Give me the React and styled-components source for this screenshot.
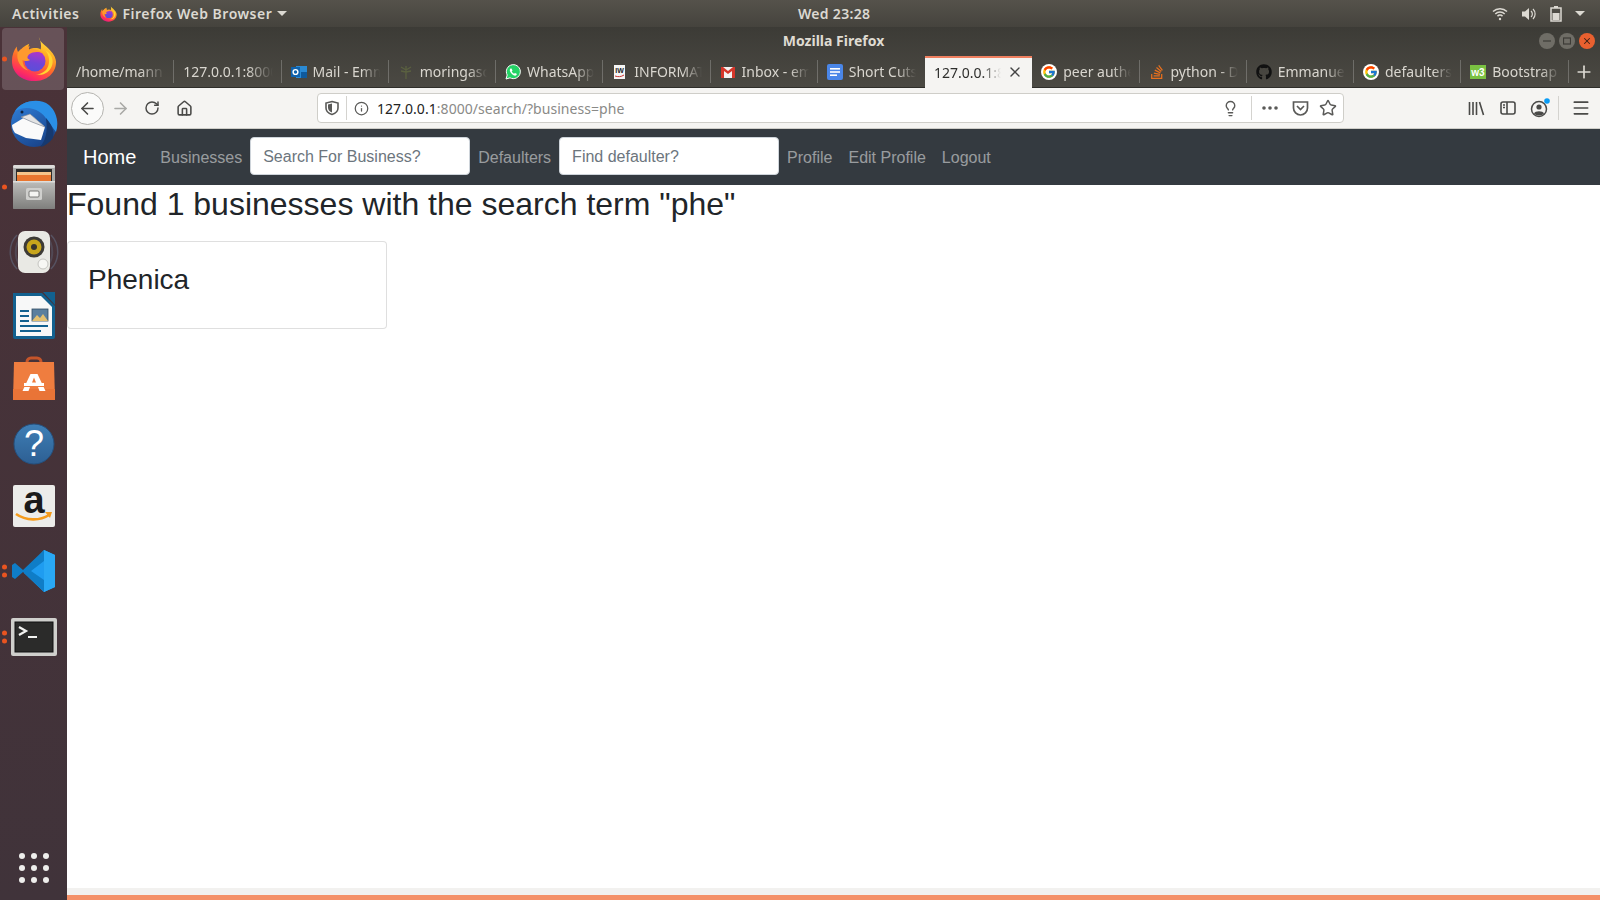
import React from 'react';
import styled, { createGlobalStyle } from 'styled-components';
import { ArrowLeft, ArrowRight, RotateCw, Home as HomeIcon, Info, Lightbulb, Star, X, Plus, Menu } from 'lucide-react';
import { FcGoogle } from 'react-icons/fc';
import { FaGithub, FaStackOverflow } from 'react-icons/fa';

const GlobalStyle = createGlobalStyle`
  html, body {
    margin: 0;
    padding: 0;
    height: 100%;
    overflow: hidden;
  }
  #root {
    height: 100%;
  }
  * {
    box-sizing: border-box;
  }
`;

const Screen = styled.div`
  width: 1600px;
  height: 900px;
  display: flex;
  flex-direction: column;
  font-family: 'Noto Sans', sans-serif;
  background: #fff;
`;

const TopPanel = styled.div`
  height: 27px;
  flex: none;
  display: grid;
  grid-template-columns: 798px 72px 1fr;
  align-items: center;
  background: linear-gradient(#55524b, #45433d);
  color: #dcd9d2;
  font-size: 14px;
  font-weight: 600;
  letter-spacing: 0.5px;
`;

const PanelLeft = styled.div`
  display: flex;
  align-items: center;
  padding-left: 12px;
`;

const AppMenu = styled.div`
  display: flex;
  align-items: center;
  gap: 5px;
  margin-left: 21px;
`;

const Caret = styled.span`
  width: 0;
  height: 0;
  border-left: 5px solid transparent;
  border-right: 5px solid transparent;
  border-top: 5px solid #dcd9d2;
`;

const Clock = styled.div`
  text-align: center;
  white-space: nowrap;
  letter-spacing: 0.3px;
`;

const PanelRight = styled.div`
  display: flex;
  align-items: center;
  justify-content: flex-end;
  gap: 13px;
  padding-right: 15px;
`;

const Desktop = styled.div`
  flex: 1;
  min-height: 0;
  display: flex;
`;

const Dock = styled.div`
  width: 67px;
  flex: none;
  display: flex;
  flex-direction: column;
  background: linear-gradient(#4a3238, #40333a);
`;

const DockItem = styled.div`
  position: relative;
  height: 64.2px;
  flex: none;
  display: flex;
  align-items: center;
  justify-content: center;
  padding-bottom: ${(p) => (p.$lift || 0) * 2}px;
`;

const DockActive = styled(DockItem)`
  &::before {
    content: '';
    position: absolute;
    left: 2px;
    right: 3px;
    top: 1px;
    bottom: 1px;
    border-radius: 4px;
    background: rgba(255, 255, 255, 0.16);
  }
  svg {
    position: relative;
  }
`;

const DockGrid = styled(DockItem)`
  margin-top: auto;
`;

const RunDots = styled.div`
  position: absolute;
  left: 2px;
  top: calc(50% - ${(p) => p.$lift || 0}px);
  transform: translateY(-50%);
  display: flex;
  flex-direction: column;
  gap: 3px;
`;

const RunDot = styled.span`
  width: 5px;
  height: 5px;
  border-radius: 50%;
  background: #e95420;
`;

const AppsGrid = styled.div`
  display: grid;
  grid-template-columns: repeat(3, 6px);
  gap: 6px;
`;

const AppsDot = styled.span`
  width: 6px;
  height: 6px;
  border-radius: 50%;
  background: #eeeeec;
`;

const Browser = styled.div`
  flex: 1;
  min-width: 0;
  display: flex;
  flex-direction: column;
`;

const Header = styled.div`
  height: 61px;
  flex: none;
  display: flex;
  flex-direction: column;
  background: linear-gradient(#3c3b36, #4b4943);
  border-bottom: 1px solid #2f2e2a;
`;

const TitleRow = styled.div`
  height: 27px;
  flex: none;
  display: grid;
  grid-template-columns: 1fr auto 1fr;
  align-items: center;
`;

const WindowTitle = styled.div`
  grid-column: 2;
  color: #dfdbd2;
  font-size: 14px;
  font-weight: 700;
`;

const WindowControls = styled.div`
  grid-column: 3;
  display: flex;
  justify-content: flex-end;
  gap: 4px;
  padding-right: 5px;
`;

const WindowButton = styled.div`
  width: 16px;
  height: 16px;
  border-radius: 50%;
  display: flex;
  align-items: center;
  justify-content: center;
  background: ${(p) => (p.$close ? '#e9602f' : '#6f6d66')};
`;

const TabStrip = styled.div`
  flex: 1;
  display: flex;
  align-items: stretch;
  padding-top: 2px;
`;

const Tab = styled.div`
  width: 107.25px;
  flex: none;
  display: flex;
  align-items: center;
  gap: 6px;
  padding: 0 9px;
  font-size: 14px;
  color: #d9d6cf;
  position: relative;
  &::after {
    content: '';
    position: absolute;
    right: 0;
    top: 4px;
    bottom: 4px;
    width: 1px;
    background: ${(p) => (p.$bare ? 'transparent' : 'rgba(255, 255, 255, 0.22)')};
  }
`;

const ActiveTab = styled(Tab)`
  background: #f5f4f2;
  color: #2e2e2c;
  border-top: 2px solid #f08060;
  margin-bottom: -1px;
  padding: 0 9px 2px;
  &::after {
    display: none;
  }
`;

const TabLabel = styled.span`
  flex: 1;
  min-width: 0;
  white-space: nowrap;
  overflow: hidden;
  -webkit-mask-image: linear-gradient(to right, #000 72%, transparent);
  mask-image: linear-gradient(to right, #000 72%, transparent);
`;

const GoogleBadge = styled.span`
  width: 16px;
  height: 16px;
  flex: none;
  border-radius: 50%;
  background: #fff;
  display: flex;
  align-items: center;
  justify-content: center;
`;

const NewTab = styled.div`
  flex: 1;
  display: flex;
  align-items: center;
  justify-content: center;
  color: #dcd9d2;
`;

const Toolbar = styled.div`
  height: 41px;
  flex: none;
  display: flex;
  align-items: center;
  background: #f5f4f2;
  border-bottom: 1px solid #cfcec9;
  color: #4a4a48;
  padding-left: 4px;
`;

const BackButton = styled.div`
  width: 33px;
  height: 33px;
  flex: none;
  border: 1px solid #b5b4b0;
  border-radius: 50%;
  background: #fbfbfa;
  display: flex;
  align-items: center;
  justify-content: center;
`;

const ToolSlot = styled.div`
  width: ${(p) => p.$w || 32}px;
  flex: none;
  display: flex;
  align-items: center;
  justify-content: center;
  color: ${(p) => p.$color || 'inherit'};
`;

const UrlBar = styled.div`
  width: 1027px;
  height: 30px;
  flex: none;
  margin-left: 117px;
  margin-right: 116px;
  display: flex;
  align-items: center;
  background: #fff;
  border: 1px solid #cfcec9;
  border-radius: 4px;
`;

const UrlDivider = styled.span`
  width: 1px;
  height: 24px;
  flex: none;
  background: #d4d3cf;
`;

const UrlText = styled.div`
  flex: 1;
  font-size: 14px;
  color: #8a8a87;
  padding-left: 2px;
  white-space: nowrap;
  letter-spacing: 0.05px;
`;

const UrlHost = styled.span`
  color: #222;
`;

const ToolDivider = styled.span`
  width: 1px;
  height: 24px;
  flex: none;
  background: #d4d3cf;
`;

const Page = styled.div`
  flex: 1;
  min-height: 0;
  background: #fff;
  font-family: 'Liberation Sans', Arial, sans-serif;
  color: #212529;
`;

const Navbar = styled.nav`
  height: 56px;
  display: flex;
  align-items: center;
  padding: 0 16px;
  background: #343a40;
`;

const Brand = styled.a`
  font-size: 20px;
  line-height: 30px;
  color: #fff;
  margin-right: 16px;
`;

const NavLink = styled.a`
  font-size: 16px;
  line-height: 24px;
  padding: 9px 8px 7px;
  color: rgba(255, 255, 255, 0.5);
`;

const NavSearch = styled.input`
  width: 220px;
  height: 38px;
  margin-top: -2px;
  padding: 7px 12px 5px;
  border: 1px solid #ced4da;
  border-radius: 4px;
  font-family: inherit;
  font-size: 16px;
  background: #fff;
  &::placeholder {
    color: #6c757d;
    opacity: 1;
  }
`;

const Results = styled.h2`
  margin: 0 0 18px;
  font-size: 32px;
  font-weight: 500;
  line-height: 38.4px;
`;

const Card = styled.div`
  width: 320px;
  height: 88px;
  padding: 21px 20px 20px;
  background: #fff;
  border: 1px solid rgba(0, 0, 0, 0.125);
  border-radius: 4px;
`;

const CardTitle = styled.h3`
  margin: 0;
  font-size: 28px;
  font-weight: 500;
  line-height: 33.6px;
`;

const StatusBar = styled.div`
  height: 12px;
  flex: none;
  background: #f2f1ef;
  border-bottom: 5px solid #f49068;
`;

const Firefox = ({ size }) => (
  <svg width={size} height={size} viewBox="0 0 48 48">
    <defs>
      <linearGradient id={`ffBody${size}`} x1="0.75" y1="0" x2="0.3" y2="1">
        <stop offset="0" stopColor="#ffe847" />
        <stop offset="0.3" stopColor="#ffb325" />
        <stop offset="0.6" stopColor="#ff6a2a" />
        <stop offset="0.85" stopColor="#ff2e5f" />
        <stop offset="1" stopColor="#e01a84" />
      </linearGradient>
      <linearGradient id={`ffGlobe${size}`} x1="0.6" y1="0" x2="0.4" y2="1">
        <stop offset="0" stopColor="#b833c8" />
        <stop offset="0.6" stopColor="#6f45d8" />
        <stop offset="1" stopColor="#5a4fd8" />
      </linearGradient>
    </defs>
    <path
      d="M29 1C30 7 36 9 41 15C45 19 47 24 47 27C47 39 37 47 24 47C11 47 1 38 1 26C1 20 3 15 6 11C6 14 7 16 8 18C10 13 14 10 19 8C18 10 18 12 19 14C23 12 28 12 31 14C32 10 31 5 29 1Z"
      fill={`url(#ffBody${size})`}
    />
    <circle cx="25" cy="26" r="11" fill={`url(#ffGlobe${size})`} />
    <path
      d="M7 17C10 13 15 11 20 11C18 13 18 14 18 15C24 13 30 15 33 18C29 16 23 16 19 19C16 22 17 24 20 25C17 27 14 26 12 25C12 29 14 33 18 36C10 34 5 25 7 17Z"
      fill="#ff9a2e"
    />
    <path d="M36 15C40 19 41 28 38 33C36 37 31 40 26 40C33 42 41 38 43 30C45 24 41 17 36 15Z" fill="#ffd531" />
  </svg>
);

const Thunderbird = () => (
  <svg width="50" height="50" viewBox="0 0 50 50">
    <defs>
      <linearGradient id="tbBody" x1="0.2" y1="0" x2="0.8" y2="1">
        <stop offset="0" stopColor="#2f7ed8" />
        <stop offset="1" stopColor="#173f84" />
      </linearGradient>
    </defs>
    <circle cx="25" cy="26" r="23" fill="url(#tbBody)" />
    <path d="M6 13C12 3 30-1 40 7c8 7 10 18 7 27L38 22C33 12 19 6 6 13z" fill="#2a8fe6" />
    <path d="M37 20c5 6 9 12 7 20-4 5-8 8-13 9 5-6 8-13 6-29z" fill="#16396f" />
    <path d="M3 27L21 16l15 13-4 13-15-2-11-5c-2-3-3-5-3-8z" fill="#fafafa" />
    <path d="M12 19l9-3 15 13-13-5z" fill="#e4e4e4" stroke="#7f8794" strokeWidth="0.7" />
    <circle cx="13" cy="14" r="1.5" fill="#10233f" />
  </svg>
);

const FilesIcon = () => (
  <svg width="42" height="44" viewBox="0 0 42 44">
    <defs>
      <linearGradient id="filesFront" x1="0" y1="0" x2="0" y2="1">
        <stop offset="0" stopColor="#bdbdbb" />
        <stop offset="1" stopColor="#7f7f7d" />
      </linearGradient>
    </defs>
    <rect width="42" height="44" rx="2" fill="#a9a9a7" />
    <rect width="42" height="3" rx="1.5" fill="#dcdcda" />
    <rect x="3" y="4" width="36" height="14" fill="#2c2c2b" />
    <rect x="4" y="7" width="34" height="3" fill="#f6c48a" />
    <rect x="4" y="10" width="34" height="6" fill="#e9762f" />
    <rect y="16" width="42" height="28" rx="1" fill="url(#filesFront)" />
    <rect y="16" width="42" height="1.500" fill="#dededc" />
    <rect x="13" y="23" width="16" height="12" rx="1.500" fill="#cfcfcd" />
    <rect x="16" y="26" width="10" height="6" rx="1" fill="#f4f4f2" stroke="#5d5d5b" strokeWidth="0.8" />
  </svg>
);

const SpeakerIcon = () => (
  <svg width="50" height="46" viewBox="0 0 50 46">
    <path d="M8 6C-1 15-1 31 8 40M42 6c9 9 9 25 0 34" fill="none" stroke="#64728a" strokeWidth="1.500" opacity="0.5" />
    <path d="M12 8C5 16 5 30 12 38M38 8c7 8 7 22 0 30" fill="none" stroke="#64728a" strokeWidth="2" opacity="0.35" />
    <rect x="9" y="2" width="32" height="42" rx="7" fill="#e9e9e4" />
    <circle cx="25" cy="18" r="10.500" fill="#3d3b36" />
    <circle cx="25" cy="18" r="7.500" fill="#c7a51c" />
    <circle cx="25" cy="18" r="3" fill="#37352f" />
    <circle cx="34" cy="35" r="5" fill="#f7f7f4" stroke="#c5c5c0" />
  </svg>
);

const WriterIcon = () => (
  <svg width="42" height="48" viewBox="0 0 42 48">
    <path d="M0 1h29l13 13v31a2 2 0 0 1-2 2H2a2 2 0 0 1-2-2z" fill="#12618f" />
    <path d="M3 4h25l11 11v29H3z" fill="#f7f8f8" />
    <path d="M30 0h12v13z" fill="#12618f" />
    <rect x="7" y="18" width="9" height="2" fill="#12618f" />
    <rect x="7" y="23" width="9" height="2" fill="#12618f" />
    <rect x="7" y="28" width="9" height="2" fill="#12618f" />
    <rect x="7" y="33" width="28" height="2" fill="#12618f" />
    <rect x="7" y="38" width="21" height="2" fill="#12618f" />
    <rect x="19" y="17" width="16" height="12" fill="#5a7f9e" stroke="#2f4a60" strokeWidth="0.8" />
    <path d="M19 29l5-6 3 3 3-4 5 7z" fill="#e2c070" />
  </svg>
);

const SoftwareIcon = () => (
  <svg width="42" height="44" viewBox="0 0 42 44">
    <path d="M14 11V6a4 4 0 0 1 4-4h6a4 4 0 0 1 4 4v5" fill="none" stroke="#c6552a" strokeWidth="3" />
    <path d="M1 6h40l1 38H0z" fill="#ef7d3f" />
    <path d="M0 33h42v11H0z" fill="#e97437" />
    <path d="M17.500 18h7l8 17h-6l-1.500-4h-8l-1.500 4h-6z" fill="#fff" />
    <path d="M21 21.500l-2 5h4z" fill="#ef7d3f" />
    <rect x="11" y="27" width="20" height="3" fill="#fff" />
    <rect x="11" y="30" width="20" height="1" fill="#ef7d3f" />
  </svg>
);

const HelpIcon = () => (
  <svg width="42" height="42" viewBox="0 0 42 42">
    <defs>
      <linearGradient id="helpFill" x1="0" y1="0" x2="0" y2="1">
        <stop offset="0" stopColor="#3f7fb6" />
        <stop offset="1" stopColor="#2d5f93" />
      </linearGradient>
    </defs>
    <circle cx="21" cy="21" r="20" fill="url(#helpFill)" stroke="#24507e" />
    <text x="21" y="33" textAnchor="middle" fontFamily="Liberation Sans, sans-serif" fontSize="36" fill="#fff">?</text>
  </svg>
);

const AmazonIcon = () => (
  <svg width="42" height="42" viewBox="0 0 42 42">
    <rect width="42" height="42" rx="2" fill="#ececea" />
    <text x="21" y="28" textAnchor="middle" fontFamily="Liberation Sans, sans-serif" fontWeight="700" fontSize="38" fill="#1b1b1b">a</text>
    <path d="M3 29c10 7 24 7 33 1" fill="none" stroke="#f59b1c" strokeWidth="2.600" />
    <path d="M32 27l7 0-2 6z" fill="#f59b1c" />
  </svg>
);

const VSCodeIcon = () => (
  <svg width="44" height="44" viewBox="0 0 44 44">
    <path d="M32 1l11 5v32l-11 5-20-19z" fill="#1f9cf0" />
    <path d="M32 1L11 21 3 14 0 16v12l3 2 8-7 21 20V31L19 22 32 12z" fill="#0f7dc7" />
    <path d="M32 1l11 5v32l-11 5z" fill="#29a8f5" />
  </svg>
);

const TerminalIcon = () => (
  <svg width="46" height="38" viewBox="0 0 46 38">
    <rect width="46" height="38" rx="2" fill="#cfcfcc" />
    <rect x="4" y="4" width="38" height="30" fill="#2b2b2a" stroke="#111" />
    <path d="M8 9l7 4-7 4" fill="none" stroke="#f2f2f0" strokeWidth="2.200" />
    <rect x="17" y="18" width="9" height="2" fill="#f2f2f0" />
  </svg>
);

const Outlook = () => (
  <svg width="16" height="16" viewBox="0 0 16 16">
    <rect x="5" y="2" width="11" height="12" fill="#2a8ad4" />
    <rect x="10" y="8" width="6" height="6" fill="#105a9c" />
    <rect y="3" width="9" height="10" fill="#0f62ad" />
    <circle cx="4.500" cy="8" r="2.400" fill="none" stroke="#fff" strokeWidth="1.400" />
  </svg>
);

const Tree = () => (
  <svg width="16" height="16" viewBox="0 0 16 16">
    <path d="M8 15V6M8 6L3 3M8 6l5-3M8 8L3 7M8 8l5-1M8 6V2" fill="none" stroke="#5a6040" strokeWidth="1.300" />
  </svg>
);

const WhatsApp = () => (
  <svg width="16" height="16" viewBox="0 0 16 16">
    <path d="M1 15l1.200-4A7 7 0 1 1 5 13.800z" fill="#25d366" stroke="#fff" strokeWidth="1" />
    <path d="M5.500 4.500c-1 1-1 2.500.5 4.500s3.500 3 5 2.500l1-1.500-2-1-1 .8c-1-.5-1.800-1.300-2.300-2.300l.8-1-1-2z" fill="#fff" />
  </svg>
);

const Tw = () => (
  <svg width="16" height="16" viewBox="0 0 16 16">
    <rect x="2" y="1" width="11" height="14" fill="#f5f5f5" />
    <text x="7.500" y="9" textAnchor="middle" fontSize="7" fontWeight="700" fontFamily="Liberation Sans, sans-serif" fill="#222">IW</text>
    <path d="M3 12c3 1 6 1 9-1" stroke="#c9302c" strokeWidth="1" fill="none" />
  </svg>
);

const Gmail = () => (
  <svg width="16" height="16" viewBox="0 0 16 16">
    <rect x="1" y="3" width="14" height="11" fill="#f2f2f2" />
    <path d="M1 3v11h3V7l4 3 4-3v7h3V3h-2L8 7 3 3z" fill="#d5362a" />
  </svg>
);

const Docs = () => (
  <svg width="16" height="16" viewBox="0 0 16 16">
    <rect width="16" height="16" rx="2" fill="#4a86e8" />
    <rect x="3" y="4" width="10" height="1.600" fill="#fff" />
    <rect x="3" y="7.200" width="10" height="1.600" fill="#fff" />
    <rect x="3" y="10.400" width="7" height="1.600" fill="#fff" />
  </svg>
);

const W3 = () => (
  <svg width="16" height="14" viewBox="0 0 16 14">
    <rect width="16" height="14" fill="#7ac142" />
    <text x="8" y="10.500" textAnchor="middle" fontSize="10" fontWeight="700" fontFamily="Liberation Sans, sans-serif" fill="#fff">w3</text>
  </svg>
);

const ShieldGlyph = () => (
  <svg width="16" height="16" viewBox="0 0 16 16">
    <path d="M8 1.500l6 1.600v5c0 3-2.500 5.400-6 6.400-3.500-1-6-3.400-6-6.400v-5z" fill="none" stroke="#5a5a58" strokeWidth="1.600" />
    <path d="M8 3.500v9c-2.200-.8-4-2.600-4-4.800V4.500z" fill="#5a5a58" />
  </svg>
);

const Dots = () => (
  <svg width="18" height="6" viewBox="0 0 18 6" fill="#5a5a58">
    <circle cx="3" cy="3" r="1.800" />
    <circle cx="9" cy="3" r="1.800" />
    <circle cx="15" cy="3" r="1.800" />
  </svg>
);

const Pocket = () => (
  <svg width="17" height="16" viewBox="0 0 17 16">
    <path d="M1.500 2h14v6a7 7 0 0 1-14 0z" fill="none" stroke="#5a5a58" strokeWidth="1.700" />
    <path d="M5 6l3.500 3.500L12 6" fill="none" stroke="#5a5a58" strokeWidth="1.700" />
  </svg>
);

const LibraryGlyph = () => (
  <svg width="17" height="15" viewBox="0 0 17 15" fill="none" stroke="#4a4a48" strokeWidth="1.600">
    <path d="M1.500 1v13M5 1v13M8.500 1v13M11.500 1l4 13" />
  </svg>
);

const SidebarGlyph = () => (
  <svg width="16" height="14" viewBox="0 0 16 14" fill="none" stroke="#4a4a48" strokeWidth="1.600">
    <rect x="1" y="1" width="14" height="12" rx="2" />
    <path d="M7 1v12" />
    <path d="M3 4h2M3 6.500h2" />
  </svg>
);

const AccountGlyph = () => (
  <svg width="22" height="20" viewBox="0 0 22 20">
    <circle cx="9" cy="11" r="7.500" fill="none" stroke="#4a4a48" strokeWidth="1.500" />
    <circle cx="9" cy="9" r="2.600" fill="#4a4a48" />
    <path d="M4 15.500c1-3 9-3 10 0-2 2.500-8 2.500-10 0z" fill="#4a4a48" />
    <circle cx="17" cy="3" r="2.800" fill="#0a9cf5" />
  </svg>
);

const WifiGlyph = () => (
  <svg width="16" height="14" viewBox="0 0 16 14" fill="none" stroke="#dcd9d2" strokeWidth="1.500">
    <path d="M1 4.500a10 10 0 0 1 14 0M3.300 7a6.500 6.500 0 0 1 9.400 0M5.500 9.300a3.200 3.200 0 0 1 5 0" />
    <circle cx="8" cy="12" r="1.200" fill="#dcd9d2" stroke="none" />
  </svg>
);

const VolumeGlyph = () => (
  <svg width="16" height="14" viewBox="0 0 16 14">
    <path d="M1 4.500h3l4-3.500v12l-4-3.500H1z" fill="#dcd9d2" />
    <path d="M10 4a4 4 0 0 1 0 6M12 2a7 7 0 0 1 0 10" fill="none" stroke="#dcd9d2" strokeWidth="1.200" />
  </svg>
);

const BatteryGlyph = () => (
  <svg width="12" height="16" viewBox="0 0 12 16">
    <rect x="4" y="0" width="4" height="2" fill="#dcd9d2" />
    <rect x="1" y="2" width="10" height="13" fill="none" stroke="#dcd9d2" strokeWidth="1.500" />
    <rect x="2.500" y="7" width="7" height="7" fill="#dcd9d2" />
  </svg>
);

const Google = () => (
  <GoogleBadge>
    <FcGoogle size={14} />
  </GoogleBadge>
);

const dockApps = [
  { id: 'firefox', icon: <Firefox size={46} />, active: true, run: 1 },
  { id: 'thunderbird', icon: <Thunderbird /> },
  { id: 'files', icon: <FilesIcon />, run: 1 },
  { id: 'rhythmbox', icon: <SpeakerIcon /> },
  { id: 'writer', icon: <WriterIcon /> },
  { id: 'software', icon: <SoftwareIcon />, lift: 2 },
  { id: 'help', icon: <HelpIcon /> },
  { id: 'amazon', icon: <AmazonIcon />, lift: 2 },
  { id: 'vscode', icon: <VSCodeIcon />, run: 2, lift: 2 },
  { id: 'terminal', icon: <TerminalIcon />, run: 2 },
];

const tabs = [
  { label: '/home/mann' },
  { label: '127.0.0.1:8000' },
  { label: 'Mail - Emmanuel', icon: <Outlook /> },
  { label: 'moringaschool', icon: <Tree /> },
  { label: 'WhatsApp', icon: <WhatsApp /> },
  { label: 'INFORMATION', icon: <Tw /> },
  { label: 'Inbox - emmanuel', icon: <Gmail /> },
  { label: 'Short Cuts', icon: <Docs /> },
  { label: '127.0.0.1:8000', active: true },
  { label: 'peer authentication', icon: <Google /> },
  { label: 'python - Django', icon: <FaStackOverflow size={16} color="#e8701e" /> },
  { label: 'Emmanuel', icon: <FaGithub size={16} color="#111" /> },
  { label: 'defaulters', icon: <Google /> },
  { label: 'Bootstrap', icon: <W3 /> },
];

function App() {
  return (
    <Screen>
      <GlobalStyle />
      <TopPanel>
        <PanelLeft>
          Activities
          <AppMenu>
            <Firefox size={17} />
            Firefox Web Browser
            <Caret />
          </AppMenu>
        </PanelLeft>
        <Clock>Wed 23:28</Clock>
        <PanelRight>
          <WifiGlyph />
          <VolumeGlyph />
          <BatteryGlyph />
          <Caret />
        </PanelRight>
      </TopPanel>
      <Desktop>
        <Dock>
          {dockApps.map((app) => {
            const Item = app.active ? DockActive : DockItem;
            return (
              <Item key={app.id} $lift={app.lift}>
                {app.run ? (
                  <RunDots $lift={app.lift}>
                    {Array.from({ length: app.run }).map((_, i) => (
                      <RunDot key={i} />
                    ))}
                  </RunDots>
                ) : null}
                {app.icon}
              </Item>
            );
          })}
          <DockGrid>
            <AppsGrid>
              {Array.from({ length: 9 }).map((_, i) => (
                <AppsDot key={i} />
              ))}
            </AppsGrid>
          </DockGrid>
        </Dock>
        <Browser>
          <Header>
            <TitleRow>
              <WindowTitle>Mozilla Firefox</WindowTitle>
              <WindowControls>
                <WindowButton>
                  <svg width="8" height="8" viewBox="0 0 8 8"><path d="M0 4h8" stroke="#3c3b36" strokeWidth="1.200" /></svg>
                </WindowButton>
                <WindowButton>
                  <svg width="8" height="8" viewBox="0 0 8 8"><rect x="0.500" y="1" width="7" height="6" fill="none" stroke="#3c3b36" strokeWidth="1.200" /></svg>
                </WindowButton>
                <WindowButton $close>
                  <X size={10} color="#3c2015" strokeWidth={2.5} />
                </WindowButton>
              </WindowControls>
            </TitleRow>
            <TabStrip>
              {tabs.map((tab, i) =>
                tab.active ? (
                  <ActiveTab key={i}>
                    <TabLabel>{tab.label}</TabLabel>
                    <X size={16} color="#444" />
                  </ActiveTab>
                ) : (
                  <Tab key={i} $bare={i === 7}>
                    {tab.icon}
                    <TabLabel>{tab.label}</TabLabel>
                  </Tab>
                ),
              )}
              <NewTab>
                <Plus size={20} />
              </NewTab>
            </TabStrip>
          </Header>
          <Toolbar>
            <BackButton>
              <ArrowLeft size={19} />
            </BackButton>
            <ToolSlot $color="#a9a9a6">
              <ArrowRight size={19} />
            </ToolSlot>
            <ToolSlot>
              <RotateCw size={16} strokeWidth={2.2} />
            </ToolSlot>
            <ToolSlot>
              <HomeIcon size={17} strokeWidth={2.2} />
            </ToolSlot>
            <UrlBar>
              <ToolSlot $w={28}>
                <ShieldGlyph />
              </ToolSlot>
              <UrlDivider />
              <ToolSlot $w={28} $color="#5a5a58">
                <Info size={15} />
              </ToolSlot>
              <UrlText>
                <UrlHost>127.0.0.1</UrlHost>:8000/search/?business=phe
              </UrlText>
              <ToolSlot $w={42} $color="#5a5a58">
                <Lightbulb size={17} />
              </ToolSlot>
              <ToolDivider />
              <ToolSlot $w={35}>
                <Dots />
              </ToolSlot>
              <ToolSlot $w={26}>
                <Pocket />
              </ToolSlot>
              <ToolSlot $w={30} $color="#5a5a58">
                <Star size={18} strokeWidth={2} />
              </ToolSlot>
            </UrlBar>
            <ToolSlot>
              <LibraryGlyph />
            </ToolSlot>
            <ToolSlot>
              <SidebarGlyph />
            </ToolSlot>
            <ToolSlot $w={34}>
              <AccountGlyph />
            </ToolSlot>
            <ToolDivider />
            <ToolSlot $w={44}>
              <Menu size={20} strokeWidth={2} />
            </ToolSlot>
          </Toolbar>
          <Page>
            <Navbar>
              <Brand>Home</Brand>
              <NavLink>Businesses</NavLink>
              <NavSearch placeholder="Search For Business?" />
              <NavLink>Defaulters</NavLink>
              <NavSearch placeholder="Find defaulter?" />
              <NavLink>Profile</NavLink>
              <NavLink>Edit Profile</NavLink>
              <NavLink>Logout</NavLink>
            </Navbar>
            <Results>Found 1 businesses with the search term "phe"</Results>
            <Card>
              <CardTitle>Phenica</CardTitle>
            </Card>
          </Page>
          <StatusBar />
        </Browser>
      </Desktop>
    </Screen>
  );
}

export default App;
